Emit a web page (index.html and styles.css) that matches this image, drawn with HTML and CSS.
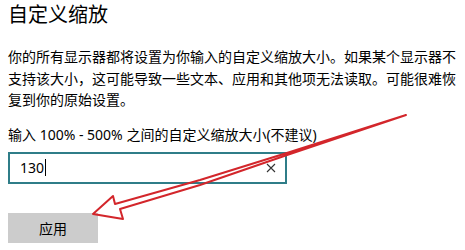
FILE: index.html
```html
<!DOCTYPE html>
<html lang="zh-CN">
<head>
    <meta charset="UTF-8">
    <meta name="viewport" content="width=device-width, initial-scale=1.0">
    <title>自定义缩放</title>
    <link rel="stylesheet" href="styles.css">
</head>
<body>

    <h1>自定义缩放</h1>
    <p class="desc">你的所有显示器都将设置为你输入的自定义缩放大小。如果某个显示器不支持该大小，这可能导致一些文本、应用和其他项无法读取。可能很难恢复到你的原始设置。</p>

    <!-- 输入框 -->
    <p class="label">输入 100% - 500% 之间的自定义缩放大小(不建议)</p>
    <div class="textbox">
        <span class="value">130</span><span class="caret"></span>
        <span class="clear">
            <svg width="10" height="10" viewBox="0 0 10 10"><path d="M1 1L9 9M9 1L1 9" stroke="#333" stroke-width="1.1" fill="none"/></svg>
        </span>
    </div>

    <button class="apply">应用</button>

    <!-- 红色箭头标注 -->
    <svg class="arrow" width="465" height="250" viewBox="0 0 465 250">
        <path d="M93 214 L113 196 L115 204 L200 180 L290 152 L406 115 L290 154 L200 185 L120 209 L123 219 Z"
              fill="none" stroke="#d3262b" stroke-width="2" stroke-linejoin="round"/>
    </svg>

</body>
</html>
```

FILE: styles.css
```css
body {
    font-family: "Noto Sans", "Noto Sans CJK SC", sans-serif;
    color: #000;
    background: #fff;
    margin: 0;
    padding: 0 8px;
}
h1 {
    font-size: 20px;
    font-weight: 400;
    line-height: 29px;
    margin: 0;
}
.desc {
    font-size: 14px;
    line-height: 21.5px;
    margin: 17px 0 0 0;
}
.label {
    font-size: 14px;
    line-height: 21.5px;
    margin: 13.5px 0 6px 0;
}
.textbox {
    box-sizing: border-box;
    width: 279px;
    height: 32px;
    border: 2px solid #2f7d88;
    padding: 0 9px 0 10px;
    display: flex;
    align-items: center;
    font-size: 14px;
}
.caret {
    width: 1px;
    height: 17px;
    background: #000;
    margin-left: 1px;
}
.clear {
    margin-left: auto;
    display: flex;
    align-items: center;
}
.apply {
    display: block;
    margin-top: 29px;
    width: 90px;
    height: 30px;
    border: none;
    background-color: #cccccc;
    font-family: "Noto Sans CJK SC", sans-serif;
    font-size: 14px;
    color: #000;
    padding: 0;
}
.arrow {
    position: absolute;
    left: 0;
    top: 0;
    pointer-events: none;
}
```
